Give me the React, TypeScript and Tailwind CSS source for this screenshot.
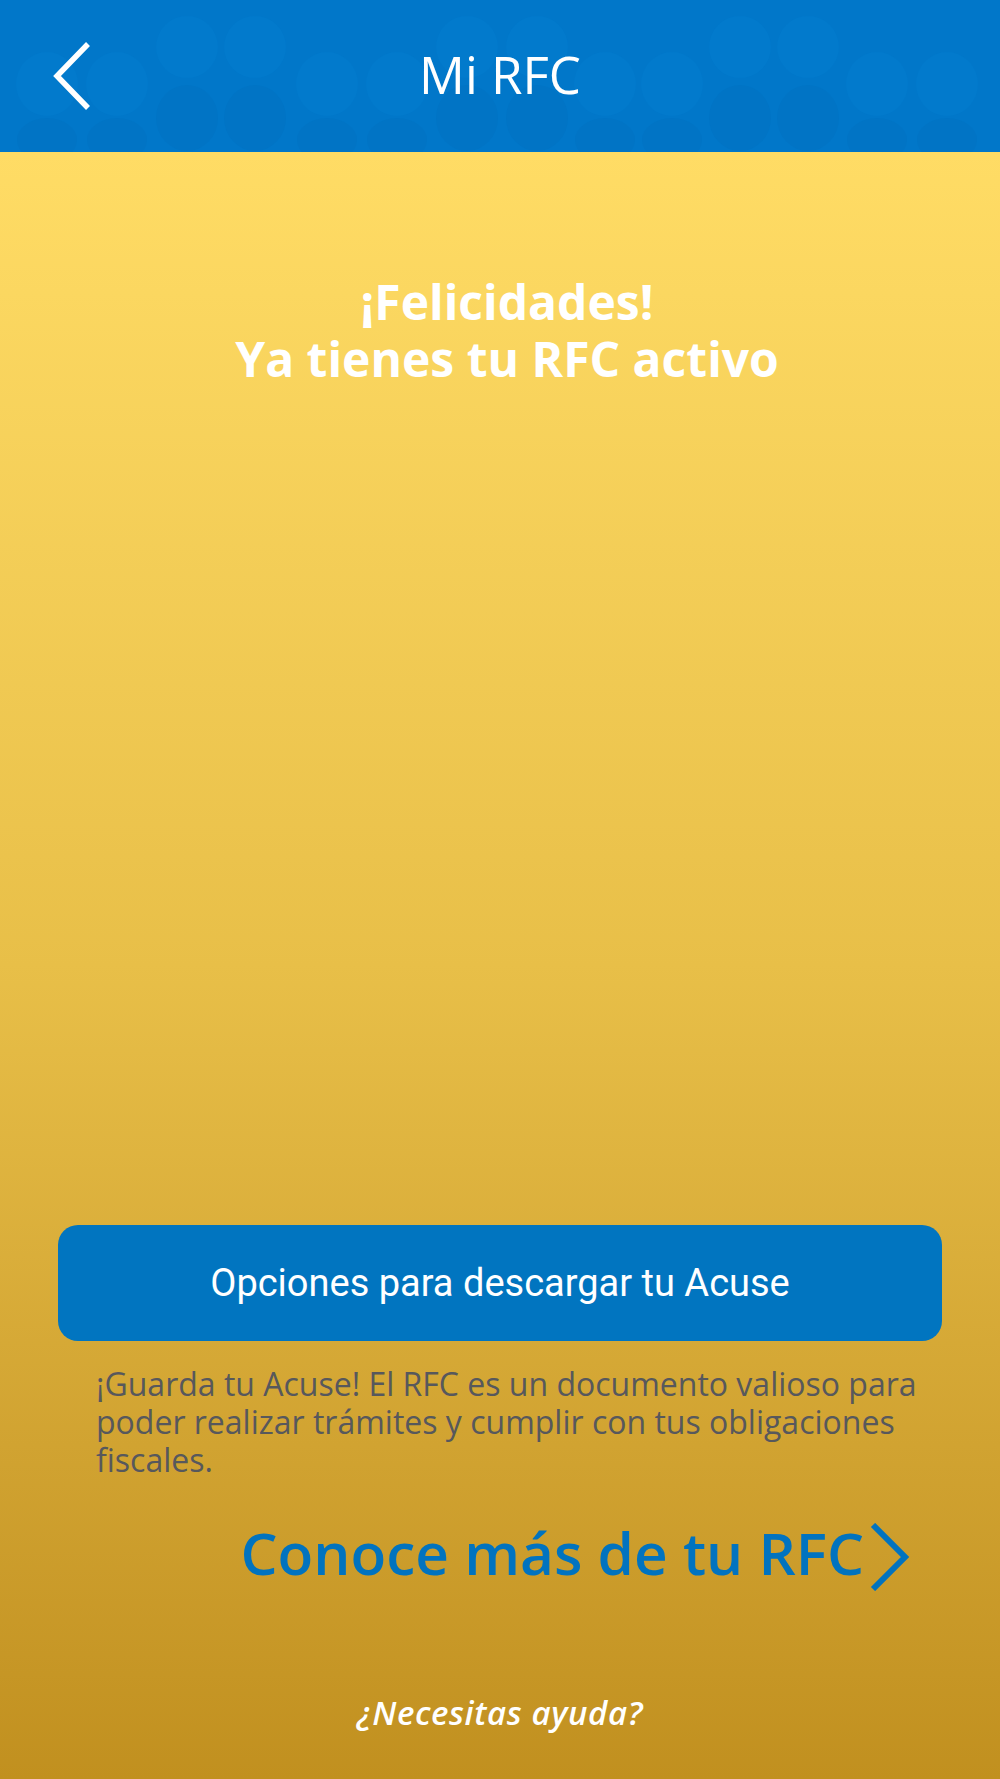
import React from 'react';

const lowCircles = [47, 117, 327, 397, 605, 672, 877, 947];
const highCircles = [187, 255, 467, 537, 740, 808];

function HeaderPattern() {
  return (
    <svg className="absolute inset-0 h-full w-full" viewBox="0 0 1000 152" preserveAspectRatio="none">
      {highCircles.map((x) => (
        <g key={`h-${x}`}>
          <ellipse cx={x} cy={47} rx={31} ry={31} fill="#027acc" />
          <ellipse cx={x} cy={118} rx={31} ry={33} fill="#0174c5" />
        </g>
      ))}
      {lowCircles.map((x) => (
        <g key={`l-${x}`}>
          <ellipse cx={x} cy={84} rx={31} ry={32} fill="#027acc" />
          <ellipse cx={x} cy={140} rx={30} ry={22} fill="#0174c5" />
        </g>
      ))}
    </svg>
  );
}

function Header() {
  return (
    <header className="relative h-[152px] overflow-hidden bg-[#0177c9]">
      <HeaderPattern />
      <div className="relative flex h-full items-center">
        <button className="ml-[50px] flex h-[72px] w-[46px] items-center">
          <svg width="42" height="70" viewBox="0 0 42 70" fill="none">
            <path d="M38 3 L7 35 L38 67" stroke="white" strokeWidth="5.5" />
          </svg>
        </button>
        <h1 className="absolute left-0 right-0 pb-[4px] text-center text-[51px] font-normal leading-none text-white">
          Mi RFC
        </h1>
      </div>
    </header>
  );
}

export default function App() {
  return (
    <div className="flex min-h-[1779px] flex-col font-['Open_Sans',sans-serif]">
      <Header />
      <main className="flex flex-1 flex-col bg-gradient-to-b from-[#ffdc65] via-[#e8bf48] to-[#c1901f]">
        <div className="pt-[121px] pl-[14px] text-center text-[48px] font-bold leading-[57px] text-white">
          <p>¡Felicidades!</p>
          <p>Ya tienes tu RFC activo</p>
        </div>

        <div className="flex-1" />

        <button className="mx-[58px] h-[116px] shrink-0 rounded-[20px] bg-[#0175c0] font-['Roboto',sans-serif] text-[38px] text-white">
          Opciones para descargar tu Acuse
        </button>

        <p className="mt-[24px] pl-[96px] pr-[60px] text-[32px] leading-[38px] text-[#57585c]">
          ¡Guarda tu Acuse! El RFC es un documento valioso para poder realizar trámites y cumplir con tus
          obligaciones fiscales.
        </p>

        <a className="mt-[44px] mr-[89px] flex items-start justify-end gap-[5px] text-[#0173bf]">
          <span className="text-[58.5px] font-semibold leading-none">Conoce más de tu RFC</span>
          <svg width="42" height="68" viewBox="0 0 42 68" fill="none">
            <path d="M4 2 L36 34 L4 66" stroke="#0173bf" strokeWidth="6" />
          </svg>
        </a>

        <p className="mt-[105px] mb-[50px] text-center text-[33px] font-semibold italic leading-none tracking-[0.6px] text-white">
          ¿Necesitas ayuda?
        </p>
      </main>
    </div>
  );
}
